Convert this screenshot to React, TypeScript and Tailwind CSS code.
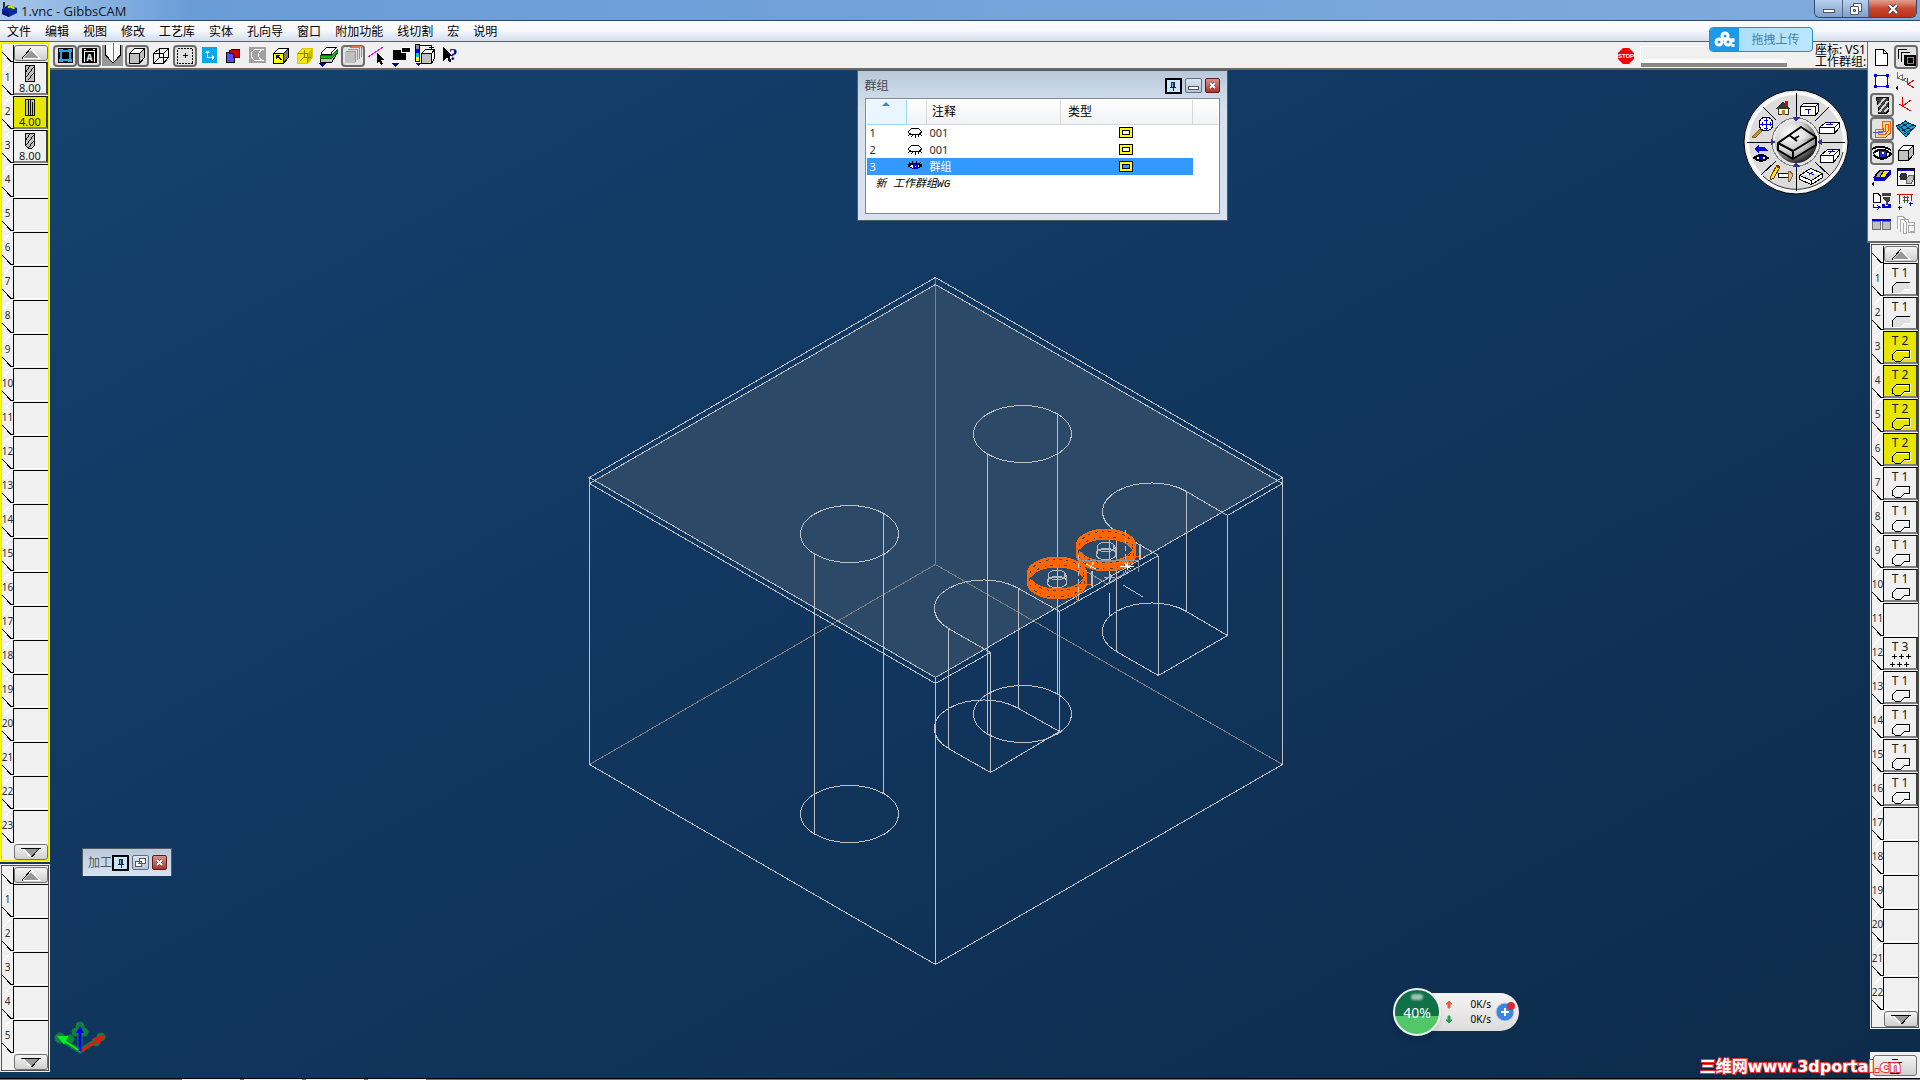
import type { ReactNode } from "react";

const MENU = ["文件", "编辑", "视图", "修改", "工艺库", "实体", "孔向导", "窗口", "附加功能", "线切割", "宏", "说明"];

const CURSOR = "M0 0V10L2 8L4 12L6 11L4 7H7Z";

function Cube({ face = "#c0c0c0", top = "#fff", side = "#c0c0c0", line = "#000" }: { face?: string; top?: string; side?: string; line?: string }) {
  return (
    <g stroke={line} strokeLinejoin="round">
      <path d="M4.5 8.5L9.5 3.5H19.5L14.5 8.5Z" fill={top} />
      <path d="M14.5 8.5L19.5 3.5V12.5L14.5 18.5Z" fill={side} />
      <path d="M4.5 8.5H14.5V18.5H4.5Z" fill={face} />
    </g>
  );
}

interface IconButton {
  label: string;
  pressed?: boolean;
  icon: ReactNode;
}

const TOOLBAR: IconButton[] = [
  {
    label: "Stock",
    pressed: true,
    icon: (
      <>
        <path d="M5 3H20V18H5Z" fill="#000" />
        <path d="M8 6H17V15H8Z" fill="none" stroke="#2ba5e0" strokeWidth="2" />
        <path d="M6 4h4v3H6zM15 4h4v3h-4zM6 14h4v3H6zM15 14h4v3h-4z" fill="#2ba5e0" />
      </>
    ),
  },
  {
    label: "Labels",
    pressed: true,
    icon: (
      <>
        <path d="M5 3H20V18H5Z" fill="#000" />
        <path d="M7.5 17V6.5H17.5V17M7 4.5h2M16 4.5h2" stroke="#fff" fill="none" />
        <text x="12.5" y="16" textAnchor="middle" fontSize="10" fontFamily="Liberation Mono" fontWeight="700" fill="#fff">A</text>
      </>
    ),
  },
  {
    label: "Tool profile",
    icon: (
      <>
        <rect x="1" y="0" width="21" height="21" fill="#989898" />
        <path d="M4.5 0V10L12 18L19.5 10V0" fill="#fff" stroke="#000" />
        <path d="M12.5 -2V16" stroke="#00c000" />
      </>
    ),
  },
  { label: "Solid", pressed: true, icon: <Cube /> },
  {
    label: "Wireframe",
    icon: (
      <g fill="none" stroke="#000">
        <path d="M4.5 8.5L10.5 3.5H19.5L14.5 8.5ZM14.5 8.5V18.5H4.5V8.5M19.5 3.5V12.5L14.5 18.5M10.5 3.5V12.5H19.5M10.5 12.5L4.5 18.5" />
      </g>
    ),
  },
  {
    label: "Select",
    pressed: true,
    icon: (
      <>
        <path d="M4.5 3.5H19.5V18.5H4.5Z" fill="none" stroke="#000" strokeDasharray="2 1" />
        <path d="M10 10.5h5M12.5 8v5" stroke="#000" />
      </>
    ),
  },
  {
    label: "Axes",
    icon: (
      <>
        <path d="M5 2H20V18H5Z" fill="#00a8ec" />
        <path d="M10.5 6V12.5H17M8 7.5h5M9 6.5h3M15.5 10v5M16.5 11v3" fill="none" stroke="#fff" />
      </>
    ),
  },
  {
    label: "Boolean",
    icon: (
      <>
        <path d="M5.5 7.5H16.5V12.5H13.5V17.5H5.5Z" fill="#5050ff" stroke="#000" />
        <path d="M8.5 8.5V6Q10 4.500 12 4.500H18.500V12.500H12.500V8.500Z" fill="#c80000" stroke="#000" />
      </>
    ),
  },
  {
    label: "Section",
    icon: (
      <>
        <path d="M4 2H21V18H4Z" fill="#a0a0a0" />
        <path d="M18.5 4.500H11Q6.500 5 6.500 10T11 15.500H18.500Q13.500 14 13.500 10T18.500 4.500Z" fill="none" stroke="#fff" />
      </>
    ),
  },
  {
    label: "Face select",
    icon: (
      <>
        <Cube face="#ffff00" side="#808060" />
        <path d="M7 10h5l-2 1.500 3 3-1 1-3-3L7 15Z" fill="#000" />
      </>
    ),
  },
  {
    label: "Edge select",
    icon: (
      <>
        <Cube face="#f4e800" side="#c8b800" top="#f4e800" line="#d8cc00" />
        <path d="M7 16L11 12H18M11 12V5M4.500 8.500H14.500V18" fill="none" stroke="#8a8200" />
      </>
    ),
  },
  {
    label: "Section depth",
    icon: (
      <>
        <path d="M3.5 14.500L8.500 9.500H19.500L14.500 17.500H3.500Z" fill="#c0c0c0" stroke="#000" />
        <path d="M3.500 10.500H14.500L20.500 5V8L14.500 13.500H3.500Z" fill="#20b020" stroke="#087008" />
        <path d="M4.500 7.500L9.500 2.500H19.500L14.500 7.500V9.500H4.500Z" fill="#fff" stroke="#000" />
        <path d="M2 18H9L5.500 22Z" fill="#0000b0" />
      </>
    ),
  },
  {
    label: "Layers",
    pressed: true,
    icon: (
      <>
        <path d="M4 7H14V18H4Z" fill="#c0c0c0" />
        <path d="M5 6.500H14.500V17M7 4.500H16.500V15M9 2.500H18.500V14M11 1.500H20.500V12" fill="none" stroke="#e87840" />
      </>
    ),
  },
  {
    label: "Line select",
    icon: (
      <>
        <path d="M3 12L18 2" stroke="#ff00ff" />
        <path d={CURSOR} transform="translate(12 8)" fill="#000" />
      </>
    ),
  },
  {
    label: "Bodies",
    icon: (
      <>
        <path d="M4 5H17V15H4Z" fill="#000" />
        <path d="M12.500 2.500H21.500V7.500H12.500Z" fill="#000" stroke="#fff" />
        <path d="M3 18H10L6.500 22Z" fill="#0000b0" />
      </>
    ),
  },
  {
    label: "Colours",
    icon: (
      <>
        <path d="M2.500 -0.500H6.500V16.500H2.500Z" fill="#909090" stroke="#000" />
        <path d="M3 4h3v4H3z" fill="#00f" />
        <path d="M3 8h3v4H3z" fill="#0cc" />
        <path d="M3 12h3v4H3z" fill="#ff0" />
        <path d="M8.500 8.500L12.500 4.500H21.500L18.500 8.500ZM18.500 8.500L21.500 4.500V13.500L18.500 18.500Z" fill="#fff" stroke="#000" />
        <path d="M8.500 8.500H18.500V18.500H8.500Z" fill="#c0c0c0" stroke="#000" />
        <path d="M7 0.500H18.500V4M16 2.500h5" stroke="#000" fill="none" />
        <path d="M3 18H8L5.500 21Z" fill="#0000b0" />
      </>
    ),
  },
  {
    label: "Context help",
    icon: (
      <>
        <path d="M6 2V16L10 12L12 17H14L13 11H16Z" fill="#000" />
        <text x="12" y="15" fontSize="17" fontWeight="700" fontFamily="Liberation Serif" fill="#000080">?</text>
      </>
    ),
  },
];

const PALETTE: IconButton[] = [
  { label: "New", icon: <path d="M5.500 4.500H13.500L17.500 8.500V20.500H5.500ZM13.500 4.500V8.500H17.500" fill="#fff" stroke="#000" /> },
  {
    label: "Workgroups",
    pressed: true,
    icon: (
      <>
        <path d="M4.500 14V4.500H13M7.500 17V7.500H16M10.500 20V10.500H18" fill="none" stroke="#000" />
        <path d="M11 10H22V21H11Z" fill="#000" />
        <path d="M13.500 12.500H19.500V18.500H13.500Z" fill="none" stroke="#2ba5e0" />
      </>
    ),
  },
  {
    label: "Geometry",
    icon: (
      <>
        <path d="M5.500 6.500H17.500V17.500H5.500Z" fill="#fff" stroke="#0000e0" />
        <path d="M4 5h3v3H4zM16 5h3v3h-3zM4 16h3v3H4zM16 16h3v3h-3z" fill="#0000e0" />
      </>
    ),
  },
  {
    label: "Coordinate systems",
    icon: (
      <g fill="none">
        <path d="M3.500 3V9L8 11M8.500 5V11L13 13M3.500 9l4-3M8.500 12l3-3" stroke="#707070" />
        <path d="M13.500 9V15L20 19M14 15L20 11" stroke="#f00000" />
        <path d="M4 16V22L1 19Z" fill="#000" />
      </g>
    ),
  },
  {
    label: "Tools",
    pressed: true,
    icon: (
      <>
        <path d="M6.500 4.500H18.500V18L16 20.500H9Z" fill="#404040" stroke="#000" />
        <path d="M7 14L15 5M9 19L18 8M14 19L18 15" stroke="#d0d0d0" strokeWidth="2" />
      </>
    ),
  },
  { label: "Coordinate system", icon: <path d="M8.500 4V13L17 18M9 13L17 7M5 11L9 13" fill="none" stroke="#e80000" /> },
  {
    label: "Machining",
    pressed: true,
    icon: (
      <>
        <path d="M5.500 20.500V12.500H12.500V4.500H20.500V16L15.500 20.500Z" fill="#ffd0a0" stroke="#f06000" />
        <path d="M8.500 17.500V14.500H15.500V7.500H18V14L15 17.500Z" fill="none" stroke="#f06000" />
        <path d="M3 15.500H12.500L14 11" fill="none" stroke="#3060ff" />
      </>
    ),
  },
  {
    label: "Surfaces",
    icon: (
      <>
        <path d="M2 9L7 7L11.500 4L17 7L22 9L17 14L12 20L7 15Z" fill="#10a8d8" stroke="#002848" />
        <path d="M5 11L15 6M8 14L19 8M10 17L20 11M8 6L17 13M4 8L14 17" stroke="#002848" fill="none" />
      </>
    ),
  },
  {
    label: "View",
    pressed: true,
    icon: (
      <>
        <path d="M2 8Q11 3 21 9M3 12Q12 5 21 13Q12 22 4 14" fill="#fff" stroke="#000" strokeWidth="2" />
        <circle cx="13" cy="13" r="4" fill="#1830c0" stroke="#000" />
        <circle cx="13" cy="12" r="1" fill="#fff" />
      </>
    ),
  },
  { label: "Solids", icon: <g transform="translate(0 1)"><Cube /></g> },
  {
    label: "Stock body",
    icon: (
      <>
        <path d="M4 12L10 5H21L15 12Z" fill="#ffe800" stroke="#000080" />
        <path d="M5 12L10 5H14L10 12Z" fill="#a0a0a0" stroke="#000" />
        <path d="M4 12H15V16H4ZM15 12L21 5V9L15 16Z" fill="#0000d0" />
        <path d="M4 16V22L1 19Z" fill="#000" />
      </>
    ),
  },
  {
    label: "Render",
    icon: (
      <>
        <path d="M3.500 3.500H20.500V20.500H3.500Z" fill="#f8f8f8" stroke="#000" />
        <path d="M4 4h16v2H4z" fill="#0000d0" />
        <path d="M12.500 13.500L15 10.500H19V15L17 18.500H12.500Z" fill="#c0c0c0" stroke="#606060" />
        <circle cx="9.500" cy="11.500" r="4" fill="#303030" />
      </>
    ),
  },
  {
    label: "Post",
    icon: (
      <>
        <path d="M3.500 4.500H8L10.500 7V13.500H3.500Z" fill="#fff" stroke="#000" />
        <path d="M12 4h9v3h-9zM13 8h7v3l-2 2v3h-2v-3l-2-2z" fill="#404040" />
        <path d="M12 15h3v2h3v-2h3v4h-9z" fill="#0000d0" />
        <path d="M3.500 15V18.500H10M7 16l3 2.500-3 2" fill="none" stroke="#0000d0" />
      </>
    ),
  },
  {
    label: "Dimensions",
    icon: (
      <>
        <path d="M5.500 15V5.500H17.500V12M3 5.500h4M16 5.500h3" fill="none" stroke="#e00000" />
        <path d="M9 8.500h6M9 11.500h6M10.500 7v7M13.500 7v7" stroke="#505050" />
        <path d="M4 18.500h4M5.500 17v4M15 14.500h4M16.500 13v4" stroke="#0000d0" />
      </>
    ),
  },
  {
    label: "Split view",
    icon: (
      <>
        <path d="M2 6h19v2H2z" fill="#0000e0" />
        <path d="M2.500 8.500H10.500V16.500H2.500ZM12.500 8.500H20.500V16.500H12.500Z" fill="#c0c0c0" stroke="#707070" />
      </>
    ),
  },
  {
    label: "Copies",
    icon: <path d="M3.500 15.500V3.500H9L11.500 6H14.500V9H20.500V18.500H16M6.500 18.500V6.500H10L12 9V20.500H9.500V9.500M14.500 12.500H20.500V19.500H14.500Z" fill="#f8f8f8" stroke="#a8a8a8" />,
  },
];

function ToolButton({ item, tall }: { item: IconButton; tall?: boolean }) {
  return (
    <button aria-label={item.label} className={`flex w-6 shrink-0 items-center justify-center ${tall ? "h-6" : "h-[22px]"} ${item.pressed ? "rounded border-2 border-[#6c6c6c] bg-[#e2e2e2]" : ""}`}>
      <svg className={`w-6 shrink-0 overflow-visible ${tall ? "h-6" : "h-[22px]"}`} viewBox={tall ? "0 0 24 24" : "0 0 24 22"} shapeRendering="crispEdges">
        {item.icon}
      </svg>
    </button>
  );
}

type Slot = { kind: "tool"; tip: string; label: string; active?: boolean } | { kind: "op"; label: string; shape: string; active?: boolean } | null;

function empty(n: number): Slot[] {
  return Array.from({ length: n }, () => null);
}

const op = (label: string, shape = "contour", active = false): Slot => ({ kind: "op", label, shape, active });

const TOOLS: Slot[] = [
  { kind: "tool", tip: "flat", label: "8.00" },
  { kind: "tool", tip: "rough", label: "4.00", active: true },
  { kind: "tool", tip: "ball", label: "8.00" },
  ...empty(20),
];

const OPERATIONS: Slot[] = [
  op("T 1", "face"),
  op("T 1", "face"),
  op("T 2", "contour", true),
  op("T 2", "contour", true),
  op("T 2", "contour", true),
  op("T 2", "contour", true),
  op("T 1"),
  op("T 1"),
  op("T 1"),
  op("T 1"),
  null,
  op("T 3", "drill"),
  op("T 1"),
  op("T 1"),
  op("T 1"),
  op("T 1"),
  ...empty(6),
];

function SlotContent({ slot }: { slot: Slot }) {
  if (!slot) return null;
  if (slot.kind === "tool") {
    return (
      <>
        <svg className="h-[18px] w-3" viewBox="0 0 12 18" shapeRendering="crispEdges">
          <path d={slot.tip === "ball" ? "M1.500 0.500H10.500V13L8 16.500H4L1.500 13Z" : "M1.500 0.500H10.500V17.500H1.500Z"} fill="#c0c0c0" stroke="#000" />
          {slot.tip === "rough" ? (
            <path d="M4 6V1M4 17V8L5 4M7 1V9L6 17M9 3V17" stroke="#000" fill="none" />
          ) : (
            <path d="M2 7L6 1M2 13L10 2M4 16L10 8" stroke="#000" fill="none" />
          )}
        </svg>
        <span className="leading-[11px]">{slot.label}</span>
      </>
    );
  }
  return (
    <>
      <span className="text-[12px] leading-[13px]">{slot.label}</span>
      <svg className="h-4 w-[26px] shrink-0" viewBox="0 0 26 16" shapeRendering="crispEdges">
        {slot.shape === "drill" && <path d="M5 3.500h5M12 3.500h5M19 3.500h5M3 11.500h5M10 11.500h5M17 11.500h5M7.500 1v5M14.500 1v5M21.500 1v5M5.500 9v5M12.500 9v5M19.500 9v5" stroke="#000" />}
        {slot.shape === "contour" && (
          <>
            <path d="M5.500 7L9.500 4.500H22M14 14.500L17.500 11.500H23.500V3" stroke="#fff" fill="none" />
            <path d="M5.500 7.500L9.500 3.500H22.500V10.500H17.500L13.500 14.500H8.500L5.500 12Z" fill="none" stroke="#000" />
          </>
        )}
        {slot.shape === "face" && (
          <>
            <path d="M5.500 7.500L9.500 3.500H22.500V10.500H17.500L13.500 14.500H5.500Z" fill="#e0e0e0" />
            <path d="M5.500 14V7.500L9.500 3.500H22.500" fill="none" stroke="#000" />
            <path d="M5.500 14.500H13.500L17.500 10.500H23" fill="none" stroke="#fff" />
          </>
        )}
      </svg>
    </>
  );
}

function ScrollButton({ up }: { up?: boolean }) {
  return (
    <button aria-label={up ? "Scroll up" : "Scroll down"} className="flex h-4 flex-1 items-center justify-center rounded-[3px] border border-[#707070] bg-linear-to-b from-[#f4f4f4] to-[#cfcfcf]">
      <svg className="h-[11px] w-5" viewBox="0 0 20 11" shapeRendering="crispEdges">
        {up ? (
          <>
            <path d="M3 10L10 2L17 10Z" fill="#989898" />
            <path d="M1 10.500L9.500 0.500" stroke="#000" />
            <path d="M10.500 0.500L19 10.500H2" stroke="#fff" fill="none" />
          </>
        ) : (
          <>
            <path d="M3 2H17L10 9Z" fill="#989898" />
            <path d="M0 1.500H20M18 2L10.500 10" stroke="#000" fill="none" />
            <path d="M2 2L9.500 10" stroke="#fff" />
          </>
        )}
      </svg>
    </button>
  );
}

function SlotList({ slots, active, title }: { slots: Slot[]; active?: boolean; title: string }) {
  return (
    <section aria-label={title} className={`flex w-[50px] flex-col border ${active ? "border-[#ffff00]" : "border-[#f0f0f0]"}`}>
      <div className={`flex flex-col border bg-[#f0f0f0] ${active ? "border-[#e8e800]" : "border-[#505050]"}`}>
        <div className="flex h-[18px] items-start pt-px">
          <svg className="h-[17px] w-3 shrink-0" viewBox="0 0 12 17" shapeRendering="crispEdges">
            <path d="M0 7L9 16.500H11.500V0" fill="none" stroke="#000" />
          </svg>
          <ScrollButton up />
        </div>
        <ol>
          {slots.map((slot, i) => (
            <li key={i} className="flex h-[34px]">
              <div className="relative w-[11px] shrink-0">
                <svg className="absolute inset-0 h-full w-3" viewBox="0 0 12 34" shapeRendering="crispEdges">
                  <path d="M0 10L9 0.500" stroke="#fff" />
                  <path d="M0 23L9 32.500H12" stroke="#000" fill="none" />
                </svg>
                <span className="relative flex h-[30px] items-center justify-center font-['Noto_Sans'] text-[10px] text-[#303030]">{i + 1}</span>
              </div>
              <button
                aria-label={`${title} ${i + 1}`}
                className={`mb-px flex flex-1 flex-col items-center overflow-hidden border-t border-l border-black pt-0.5 font-['Noto_Sans'] text-[11px] text-[#202020] ${slot ? "border-r-2 border-b-2 border-r-[#404040] border-b-[#808080]" : "border-b border-b-white"} ${slot?.active ? "bg-[#e6e600]" : "bg-[#f0f0f0]"}`}
              >
                <SlotContent slot={slot} />
              </button>
            </li>
          ))}
        </ol>
        <div className="flex h-4 items-center pl-3">
          <ScrollButton />
        </div>
      </div>
    </section>
  );
}

function PinButton() {
  return (
    <button aria-label="Pin" className="flex h-4 w-[17px] shrink-0 items-center justify-center border-2 border-black bg-[#c8e6ff]">
      <svg className="h-3 w-3 shrink-0" viewBox="0 0 12 12" shapeRendering="crispEdges">
        <path d="M4 2H8V7H4Z" fill="#203048" />
        <path d="M5 3h1v4H5z" fill="#9ab" />
        <path d="M3 7.500H9M6.500 8V11" stroke="#102040" />
      </svg>
    </button>
  );
}

function CloseButton() {
  return (
    <button aria-label="Close" className="flex h-[15px] w-[15px] shrink-0 items-center justify-center rounded-xs border border-[#5c1c1c] bg-linear-to-b from-[#d89088] to-[#b03028]">
      <svg className="h-[7px] w-[7px]" viewBox="0 0 7 7">
        <path d="M1 1L6 6M6 1L1 6" stroke="#303848" strokeWidth="3" />
        <path d="M1 1L6 6M6 1L1 6" stroke="#fff" strokeWidth="2" />
      </svg>
    </button>
  );
}

const GROUPS = [
  { name: "001", visible: false },
  { name: "001", visible: false },
  { name: "群组", visible: true },
];

function GroupWindow() {
  return (
    <section className="absolute top-0 left-1/2 -ml-[102px] flex h-[151px] w-[371px] flex-col border border-[#505860] bg-linear-to-b from-[#b9c9da] via-[#d5e1ee] via-25% to-[#d7e3f2] px-[7px] pb-1.5">
      <header className="flex h-[27px] shrink-0 items-center gap-[3px] pt-0.5">
        <h2 className="flex-1 text-[12px] text-[#404850]">群组</h2>
        <PinButton />
        <button aria-label="Minimize" className="flex h-[15px] w-[17px] items-end justify-center rounded-xs border border-[#606c84] bg-linear-to-b from-[#dce6f2] to-[#b4c4d8] pb-0.5">
          <span className="h-1 w-[11px] border border-[#505868] bg-white" />
        </button>
        <CloseButton />
      </header>
      <div className="flex-1 border border-[#828790] bg-white p-px">
        <table className="w-full table-fixed border-collapse text-left text-[11px] leading-4">
          <colgroup>
            <col className="w-10" />
            <col className="w-5" />
            <col className="w-[134px]" />
            <col className="w-[132px]" />
            <col />
          </colgroup>
          <thead>
            <tr className="h-6 bg-linear-to-b from-white to-[#f1f2f4] text-[12px]">
              <th aria-label="Number" className="border border-t-0 border-l-0 border-[#96d9f9] bg-[#eaf6fd] p-0 align-top">
                <svg className="mx-auto mt-0.5 h-1 w-2" viewBox="0 0 8 4">
                  <path d="M0 4L4 0L8 4Z" fill="#4c87a8" />
                </svg>
              </th>
              <th aria-label="Visible" className="border-r border-b border-[#d8d8d8]" />
              <th className="border-r border-b border-[#d8d8d8] p-0 pl-[5px] font-normal">注释</th>
              <th className="border-r border-b border-[#d8d8d8] p-0 pl-[7px] font-normal">类型</th>
              <th aria-label="Blank" className="border-b border-[#d8d8d8]" />
            </tr>
          </thead>
          <tbody>
            {GROUPS.map((g, i) => {
              const cell = g.visible ? "bg-[#3399ff] p-0 text-white" : "p-0 text-[#303030]";
              return (
                <tr key={i} className="h-[17px]">
                  <td className={`${cell} pl-[3px]`}>{i + 1}</td>
                  <td className={cell}>
                    <svg className="h-[11px] w-4" viewBox="0 0 16 11" shapeRendering="crispEdges">
                      {g.visible ? (
                        <>
                          <path d="M2 5Q8 1 14 5Q8 11 2 5Z" fill="#fff" stroke="#000" />
                          <path d="M1 5L4 3H12L15 5" fill="none" stroke="#000" strokeWidth="2" />
                          <path d="M3 3L2 1M6 2L5 0M9 2V0M12 3L14 1" stroke="#000" />
                          <path d="M6 3h5v5H6z" fill="#0000ff" />
                          <path d="M8 5h1v1H8z" fill="#fff" />
                        </>
                      ) : (
                        <>
                          <path d="M1.500 5Q3 1 8 1T14.500 5Q13 8 8 8T1.500 5Z" fill="#fff" stroke="#000" />
                          <path d="M3 7L1 9M5.500 8L4.500 10M8.500 8V11M11 8L12 10M13 7L15 9" stroke="#000" />
                        </>
                      )}
                    </svg>
                  </td>
                  <td className={`${cell} pl-[3px]`}>{g.name}</td>
                  <td className={cell}>
                    <svg className="ml-[58px] h-[11px] w-[14px]" viewBox="0 0 14 11" shapeRendering="crispEdges">
                      <path d="M0.500 0.500H13.500V10.500H0.500ZM3.500 3.500H10.500V7.500H3.500Z" fill="#ffff00" fillRule="evenodd" stroke="#000" />
                    </svg>
                  </td>
                  <td />
                </tr>
              );
            })}
          </tbody>
        </table>
        <p className="pt-px pl-[9px] font-['Liberation_Mono','Noto_Sans_CJK_SC',monospace] text-[11px] leading-4 italic">新 工作群组WG</p>
      </div>
    </section>
  );
}

function ProcessWindow() {
  return (
    <section className="absolute bottom-[202px] left-8 flex h-7 w-[90px] items-center border border-b-0 border-[#505860] bg-linear-to-b from-[#bac9da] to-[#d7e3f2] pl-[5px]">
      <h2 className="w-6 shrink-0 text-[12px] whitespace-nowrap text-[#505860]">加工</h2>
      <div className="flex items-center gap-[3px]">
        <PinButton />
        <button aria-label="Restore" className="flex h-[15px] w-[17px] shrink-0 items-center justify-center rounded-xs border border-[#606c84] bg-linear-to-b from-[#dce6f2] to-[#b4c4d8]">
          <svg className="h-[9px] w-[11px]" viewBox="0 0 11 9" shapeRendering="crispEdges">
            <path d="M4.500 0.500H10.500V5.500H4.500ZM0.500 3.500H6.500V8.500H0.500Z" fill="#fff" stroke="#505868" />
            <path d="M3 5.500h2" stroke="#505868" />
          </svg>
        </button>
        <CloseButton />
      </div>
    </section>
  );
}

// Ring toolpath: the passes are stacked ellipses, one per depth step.
function Ring({ x, y }: { x: number; y: number }) {
  return (
    <g fill="none">
      <g stroke="#ff6600">
        {[-4, -2, 0, 2, 4].map(d => (
          <ellipse key={d} cx={x} cy={y + d} rx="29" ry="16" strokeWidth="3" />
        ))}
      </g>
      <g stroke="#2c4a68">
        <ellipse cx={x} cy={y - 3} rx="27" ry="16" strokeDasharray="2 5 3 4" />
        <ellipse cx={x} cy={y + 3} rx="28" ry="16" strokeDasharray="3 6 1 4" />
      </g>
      <g stroke="#b0b8c0">
        <ellipse cx={x} cy={y - 3} rx="9" ry="5" />
        <ellipse cx={x} cy={y + 4} rx="10" ry="6" />
        <path d={`M${x - 9} ${y - 3}v7M${x + 9} ${y - 3}v7M${x - 5} ${y - 1}h12v-4`} />
      </g>
    </g>
  );
}

function Part() {
  return (
    <svg className="absolute inset-0 h-full w-full" viewBox="50 70 1817 1008" shapeRendering="crispEdges" fill="none">
      <path d="M935.500 284L1277 480L935.500 677L595 480Z" fill="#2c4a68" />
      <path d="M935.500 278V564M589.500 764.500L935.500 564.500L1282.500 764.500" stroke="#808080" />
      <g stroke="#c0c0c0">
        <path d="M935.500 277.500L1282.500 477.500L935.500 677.500L589.500 477.500Z" />
        <path d="M990.500 652.500L935.500 683.500L589.500 483.500L935.500 284.500L1282.500 483.500L1227.500 515.500M1059.500 611.500L1158.500 555.500" />
        <path d="M589.500 477.500V764.500L935.500 964.500L1282.500 764.500V477.500M935.500 677.500V964.500" />
        <ellipse cx="849.500" cy="534" rx="49" ry="28.500" />
        <ellipse cx="849.500" cy="814" rx="49" ry="28.500" />
        <path d="M814.500 554V834M883.500 514V794" />
        <ellipse cx="1022.500" cy="434" rx="49" ry="28.500" />
        <ellipse cx="1022.500" cy="714" rx="49" ry="28.500" />
        <path d="M987.500 454V734M1057.500 414V694" />
        {[0, 120].map(d => (
          <g key={d} transform={`translate(0 ${d})`}>
            <path d="M1059.500 611.500L1018.500 588.500A49 28.500 0 1 0 948.500 628.500L990.500 652.500" />
            <path d="M1227.500 515.500L1186.500 491.500A49 28.500 0 1 0 1116.500 531.500L1158.500 555.500" />
          </g>
        ))}
        <path d="M1059.500 731.500L990.500 772.500M1227.500 635.500L1158.500 675.500" />
        <path d="M948.500 628V748M1018.500 588V708M1059.500 612V732M990.500 652V772" />
        <path d="M1116.500 532V652M1186.500 492V612M1227.500 516V636M1158.500 556V676" />
        <path d="M1109.500 538V584M1109.500 593V616M1123 585L1143 597" />
      </g>
      <Ring x={1057} y={578} />
      <Ring x={1106} y={550} />
      <g stroke="#c0c0c0">
        <path d="M1078.500 555V602M1125.500 530V572" strokeDasharray="5 3" />
        <path d="M1092 571V586M1140 544V559" strokeWidth="2" />
        <path d="M1079 560.500H1138V571.500M1079 561V572M1084 570L1107 584L1130 570" stroke="#8c98a4" />
      </g>
      <path d="M1086 564l10 5M1094 562l-4 6M1120 566h14M1127 562v8M1124 563l7 6" stroke="#fff" />
      <path d="M1104 577h11M1110 574v6" stroke="#b0b8c0" />
      <path d="M1087 584H1091M1076 597L1078 602M1136 556H1139M1123 571V573" stroke="#ff6600" />
    </svg>
  );
}

function ViewBlock({ x, y, d }: { x: number; y: number; d: string }) {
  return <path d={d} transform={`translate(${x} ${y})`} fill="#fff" stroke="#000" />;
}

function ViewWheel() {
  return (
    <svg className="absolute top-[19px] right-[18px] size-[106px]" viewBox="0 0 106 106" role="img" aria-label="View control">
      <defs>
        <radialGradient id="ball" cx="0.35" cy="0.3" r="0.75">
          <stop offset="0" stopColor="#fff" />
          <stop offset="0.5" stopColor="#d0d0d0" />
          <stop offset="1" stopColor="#181818" />
        </radialGradient>
      </defs>
      <circle cx="53" cy="53" r="52" fill="#f4f4f4" stroke="#000" />
      <circle cx="53" cy="53" r="48" fill="#dcdcdc" stroke="#fff" strokeWidth="2" />
      <path d="M20 87A48 48 0 0 0 100 63" fill="none" stroke="#303030" />
      <g shapeRendering="crispEdges">
        <path d="M53 4V102M4 53H102M20 18L33 31M86 18L72 32M18 86L33 72M87 87L72 73" stroke="#000" />
        <circle cx="53" cy="53" r="24" fill="#e8e8e8" stroke="#808080" />
        <path d="M50 28H57L53 33ZM50 78H57L53 73ZM28 50V56L33 53ZM79 50V56L74 53Z" fill="#3030a0" />
      </g>
      <circle cx="53" cy="53" r="21" fill="url(#ball)" />
      <g strokeLinejoin="round" stroke="#000" strokeWidth="2" fill="none">
        <path d="M35 54L58 38L73 48L50 62ZM35 54V61L50 70L73 56V48M50 62V70" fill="#ffffff60" />
        <path d="M46 46L54 52M51 50L56 47" />
      </g>
      <g shapeRendering="crispEdges">
        <ViewBlock x={57} y={14} d="M0.500 3.500L3.500 0.500H18.500V8.500L15.500 12.500H0.500ZM0.500 3.500H15.500V12.500M15.500 3.500L18.500 0.500" />
        <ViewBlock x={76} y={33} d="M0.500 5.500L6.500 0.500H20.500V5.500L15.500 11.500H0.500ZM0.500 5.500H15.500V11.500M15.500 5.500L20.500 0.500" />
        <ViewBlock x={77} y={60} d="M0.500 6.500L7.500 0.500H19.500V5.500L13.500 13.500H0.500ZM0.500 6.500H13.500V13.500M13.500 6.500L19.500 0.500" />
        <ViewBlock x={56} y={79} d="M0.500 7.500L11.500 0.500L23.500 5.500V9.500L12.500 16.500L0.500 11.500ZM0.500 7.500L12.500 12.500L23.500 5.500M12.500 12.500V16.500" />
        <path d="M62 20.500h6M65.500 20v5M83 35.500h7M87 33v3M85 62.500h7M86 65l4-4M64 83l7 3M66 86l4-3" stroke="#0000d0" />
        <path d="M33 20L40 12L47 20Z" fill="#303830" />
        <path d="M42 12h3v5h-3z" fill="#e00000" />
        <path d="M35.500 19.500H45.500V25.500H35.500Z" fill="#fff8d0" stroke="#303030" />
        <path d="M39 21h3v5h-3z" fill="#b08030" />
        <path d="M9 48L17 40L19 42L12 49Z" fill="#c89030" stroke="#806020" />
        <circle cx="23" cy="35" r="7" fill="#fff" stroke="#000" />
        <path d="M17 35H29M23 29V41M21 31h4M21 39h4M19 33v4M27 33v4" stroke="#0000e0" />
        <path d="M11 60L16 56V58H22L25 62H16V64Z" fill="#0000e0" />
        <path d="M11 69Q18 63 25 69Q18 75 11 69Z" fill="#fff" stroke="#000" strokeWidth="2" />
        <path d="M16 67h4v4h-4z" fill="#0000c0" />
        <path d="M28 87L34 76L37 78L31 89L27 91Z" fill="#ffe000" stroke="#604000" />
        <path d="M34 77l3 2" stroke="#e00000" strokeWidth="2" />
        <path d="M35.500 84.500H45V88.500H35.500Z" fill="#fff" stroke="#000" />
        <path d="M45 82h2l3 4-3 6h-2z" fill="#e8c080" stroke="#806040" />
      </g>
    </svg>
  );
}

function AxisTriad() {
  return (
    <svg className="absolute bottom-[22px] left-1 h-9 w-[54px]" viewBox="0 0 54 36">
      <g stroke="#10803c" strokeLinecap="round" strokeLinejoin="round" fill="#10803c">
        <path d="M26 31L7 19M26 31V6M26 31L46 18" strokeWidth="5" />
        <circle cx="6" cy="18" r="5" />
        <circle cx="16" cy="19" r="4" />
        <circle cx="26" cy="6" r="4" />
        <circle cx="22" cy="12" r="4" />
        <circle cx="30" cy="12" r="4" />
        <circle cx="47" cy="17" r="4" />
        <circle cx="42" cy="22" r="4" />
      </g>
      <path d="M26 31L9 20M5 17L13 17L10 23Z" stroke="#00f020" strokeWidth="2" fill="#00f020" />
      <path d="M27 31L44 20M48 17L42 19L45 22Z" stroke="#e01818" strokeWidth="3" fill="#e01818" />
      <path d="M26 31V9" stroke="#0000f0" strokeWidth="3" />
      <path d="M22 13L26 6L30 13Z" fill="#0000f0" />
    </svg>
  );
}

function NetMonitor() {
  return (
    <div className="absolute right-[348px] bottom-[42px] flex h-12 w-[126px] items-center font-['Noto_Sans']">
      <div className="ml-5 flex h-[38px] flex-1 items-center rounded-r-full bg-linear-to-b from-[#f4f4f4] to-[#dcdcdc] pr-1 pl-8 text-[10px] leading-[15px] text-black">
        <svg className="h-6 w-2 shrink-0" viewBox="0 0 8 24">
          <path d="M4 1L7 4H5V8H3V4H1Z" fill="#f05848" stroke="#f05848" />
          <path d="M4 23L7 20H5V16H3V20H1Z" fill="#20a050" stroke="#20a050" />
        </svg>
        <div className="flex flex-1 flex-col items-end">
          <span>0K/s</span>
          <span>0K/s</span>
        </div>
        <button aria-label="Speed up" className="ml-1.5 shrink-0">
          <svg className="size-[18px] overflow-visible" viewBox="0 0 18 18">
            <circle cx="8" cy="9" r="9" fill="#3a86e0" stroke="#c8ccd0" />
            <path d="M8 5V13M4 9H12" stroke="#fff" strokeWidth="2" />
            <circle cx="14" cy="3" r="4" fill="#d82c30" />
          </svg>
        </button>
      </div>
      <div className="absolute left-0 flex size-12 items-center justify-center rounded-full border-2 border-[#f0f0f0] bg-linear-to-b from-[#107048] from-60% to-[#50c868] to-60% text-[14px] text-white shadow-md">
        <span className="absolute top-1 h-1.5 w-3 rounded-full bg-white/60 blur-[1px]" />
        40%
      </div>
    </div>
  );
}

export default function App() {
  return (
    <div className="relative flex h-screen w-full flex-col overflow-hidden bg-[#0e2c4e] font-['Noto_Sans','Noto_Sans_CJK_SC',sans-serif] text-black">
      <header className="flex h-[21px] shrink-0 items-center border-b border-[#284870] bg-linear-to-r from-[#a8c8ea] via-[#6a9cd8] via-10% to-[#80aadc] pl-0.5">
        <svg className="h-4 w-4" viewBox="0 0 16 16">
          <path d="M0 7L6 3L15 6V11L7 15L0 12Z" fill="#0828a8" />
          <path d="M0 7L7 10V15L0 12Z" fill="#041878" />
          <path d="M4 6L9 4L14 7L9 9Z" fill="#084078" />
          <path d="M6 5Q11 4 12 7" stroke="#e8e000" fill="none" strokeWidth="2" />
          <path d="M1 0H3V6H1Z" fill="#303030" />
        </svg>
        <h1 className="flex-1 pt-px pl-[3px] font-['Open_Sans'] text-[13px] leading-5 text-[#101820]">1.vnc - GibbsCAM</h1>
        <div className="mr-[3px] flex h-[18px] self-start overflow-hidden rounded-b-md border border-t-0 border-[#304868]">
          <button aria-label="Minimize" className="flex w-7 items-center justify-center border-r border-[#506888] bg-linear-to-b from-[#b8d0ec] to-[#80a0cc]">
            <span className="mt-1 h-1 w-3 border border-[#505868] bg-white" />
          </button>
          <button aria-label="Restore" className="flex w-[26px] items-center justify-center border-r border-[#506888] bg-linear-to-b from-[#b8d0ec] to-[#80a0cc]">
            <svg className="h-3 w-3" viewBox="0 0 12 12">
              <path d="M3.500 0.500H11.500V8.500H3.500Z" fill="#fff" stroke="#505868" />
              <path d="M0.500 3.500H8.500V11.500H0.500Z" fill="#fff" stroke="#505868" />
              <path d="M3.500 6.500H5.500V8.500H3.500Z" fill="#80a0cc" stroke="#505868" />
            </svg>
          </button>
          <button aria-label="Close" className="flex w-[47px] items-center justify-center bg-linear-to-b from-[#e0a090] via-[#c84830] to-[#b83018]">
            <svg className="h-2.5 w-3" viewBox="0 0 12 10">
              <path d="M2 1L10 9M10 1L2 9" stroke="#404858" strokeWidth="4" />
              <path d="M2 1L10 9M10 1L2 9" stroke="#fff" strokeWidth="2" />
            </svg>
          </button>
        </div>
      </header>

      <nav className="flex h-[21px] shrink-0 items-center gap-3.5 border-t border-b border-t-white border-b-[#606060] bg-linear-to-b from-[#f8fafd] from-40% to-[#d4dcee] pt-px pl-[7px] text-[12px] leading-5">
        {MENU.map(m => (
          <button key={m}>{m}</button>
        ))}
      </nav>

      <div className="flex min-h-0 flex-1 bg-linear-to-br from-[#14426f] via-[#11365e] to-[#0d2b4a]">
        <aside className="flex shrink-0 flex-col gap-0.5">
          <SlotList slots={TOOLS} active title="Tool" />
          <SlotList slots={empty(5)} title="Process" />
        </aside>

        <main className="flex min-w-0 flex-1 flex-col">
          <div className="flex h-7 shrink-0 items-center overflow-hidden border-b-2 border-[#686868] bg-[#f0f0f0] pt-0.5 pl-[3px]">
            <div className="flex flex-1">
              {TOOLBAR.map(t => (
                <ToolButton key={t.label} item={t} />
              ))}
            </div>
            <button aria-label="Stop" className="mr-1.5 flex size-4 shrink-0">
              <svg className="size-4" viewBox="0 0 16 16">
                <path d="M5 0H11L16 5V11L11 16H5L0 11V5Z" fill="#f00000" />
                <text x="8" y="10" textAnchor="middle" fontSize="6" fontWeight="700" fontFamily="Liberation Sans" fill="#fff">STOP</text>
              </svg>
            </button>
            <div className="mr-7 h-5 w-[147px] border-t border-l border-white">
              <div className="mt-3 h-1 bg-white" />
              <div className="h-1 bg-[#888888]" />
            </div>
            <p className="flex w-[52px] shrink-0 flex-col text-[12px] leading-3 whitespace-nowrap">
              <span>座标: VS1</span>
              <span>工作群组:</span>
            </p>
          </div>
          <div className="relative min-h-0 flex-1">
            <Part />
            <GroupWindow />
            <ViewWheel />
            <ProcessWindow />
            <AxisTriad />
            <NetMonitor />
          </div>
        </main>

        <aside className="flex w-[53px] shrink-0 flex-col items-end">
          <div className="grid w-full shrink-0 grid-cols-2 border-b-2 border-l border-[#686868] bg-[#f0f0f0] pt-[3px] pr-0.5 pb-1 pl-0.5">
            {PALETTE.map(p => (
              <ToolButton key={p.label} item={p} tall />
            ))}
          </div>
          <SlotList slots={OPERATIONS} title="Operation" />
          <div className="mt-auto w-[50px] bg-[#f0f0f0] p-[3px] pb-0.5">
            <button aria-label="Trash" className="flex h-[21px] w-full items-center justify-center rounded-[3px] border border-[#707070] bg-linear-to-b from-[#f4f4f4] to-[#cfcfcf]">
              <svg className="h-4 w-4" viewBox="0 0 16 16" shapeRendering="crispEdges">
                <path d="M3.500 5V15.500H12.500V5M1 4.500H15M5 1.500H11M6.500 7V13M9.500 7V13" fill="none" stroke="#000" />
              </svg>
            </button>
          </div>
        </aside>
      </div>

      <footer className="flex h-0.5 shrink-0 gap-1 border-t border-black bg-[#70788a] pl-[182px]">
        {[0, 1, 2, 3].map(i => (
          <span key={i} className="w-[58px] bg-[#f4f0f0]" />
        ))}
      </footer>

      <button className="absolute top-[27px] right-[107px] flex h-[25px] w-[104px] items-center overflow-hidden rounded-sm border border-[#2090c8] bg-linear-to-r from-[#a8dcf8] to-[#bce6fc] text-[12px] text-[#4880a0]">
        <span className="flex h-full w-[29px] items-center justify-center bg-[#2098e8]">
          <svg className="h-[17px] w-[21px]" viewBox="0 0 21 17" fill="none" stroke="#fff" strokeWidth="3">
            <circle cx="11" cy="5" r="3" />
            <circle cx="5" cy="11" r="3" />
            <circle cx="14" cy="11" r="3" />
            <path d="M19 7V11M19 13V16" />
          </svg>
        </span>
        <span className="flex-1">拖拽上传</span>
      </button>

      <a href="http://www.3dportal.cn" className="absolute right-[19px] bottom-px font-['DejaVu_Sans','Noto_Sans_CJK_SC',sans-serif] text-[16px] leading-6 font-bold text-white [-webkit-text-stroke:2px_#f03030] [paint-order:stroke_fill]">
        三维网www.3dportal.cn
      </a>
    </div>
  );
}
